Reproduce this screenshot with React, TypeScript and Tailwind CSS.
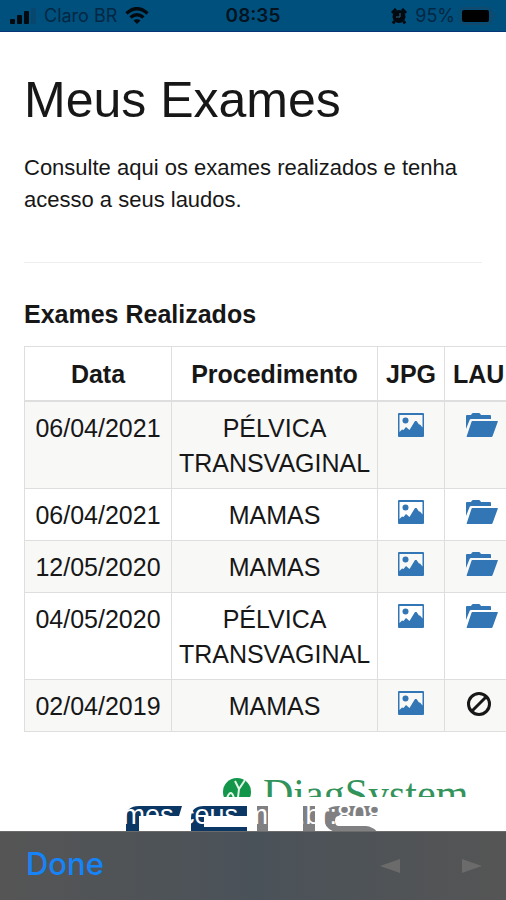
import React from 'react';

type Exam = {
  date: string;
  procedure: string[];
  report: boolean;
};

const exams: Exam[] = [
  { date: '06/04/2021', procedure: ['PÉLVICA', 'TRANSVAGINAL'], report: true },
  { date: '06/04/2021', procedure: ['MAMAS'], report: true },
  { date: '12/05/2020', procedure: ['MAMAS'], report: true },
  { date: '04/05/2020', procedure: ['PÉLVICA', 'TRANSVAGINAL'], report: true },
  { date: '02/04/2019', procedure: ['MAMAS'], report: false },
];

const PictureIcon = () => (
  <svg viewBox="0 0 26 24" className="w-[26px] h-6" fill="currentColor" aria-hidden="true">
    <path fillRule="evenodd" d="M1 0H25Q26 0 26 1V23Q26 24 25 24H1Q0 24 0 23V1Q0 0 1 0ZM1.500 2V19L4 16.500L5.500 17L8 14L11.500 17L17 8L18.500 8L21 11.500L22 11.500L24.500 14.500V2Z" />
    <circle cx="7.500" cy="7.500" r="3" />
  </svg>
);

const FolderIcon = () => (
  <svg viewBox="0 0 32 24" className="w-8 h-6" fill="currentColor" aria-hidden="true">
    <path d="M0 16V3Q0 2 1 2H5L6 .5Q6.300 0 7 0H13Q13.700 0 14 .5L15 2H24Q25 2 25 3V6H5Q4 6 3.600 7Z" />
    <path d="M6.500 8H31.500Q32 8 31.800 8.800L26.500 23.200Q26.200 24 25.500 24H1Q.4 24 .7 23.200L5.500 8.800Q5.800 8 6.500 8Z" />
  </svg>
);

const BanIcon = () => (
  <svg viewBox="0 0 26 26" className="size-[26px]" fill="none" stroke="currentColor" strokeWidth="3" aria-hidden="true">
    <circle cx="13" cy="13" r="10.500" />
    <path d="M5.500 20.500L20.500 5.500" />
  </svg>
);

const StatusBar = () => (
  <header className="flex h-8 items-center border-b border-[#06357a] bg-[#00507d] px-[10px] font-['Inter',sans-serif] text-lg leading-8 text-[#042742]">
    <div className="flex flex-1 items-center gap-2">
      <svg viewBox="0 0 26 16" className="w-[26px] h-4" aria-hidden="true">
        <g fill="#020a10">
          <rect x="0" y="11" width="5" height="5" rx="1" />
          <rect x="7" y="7" width="5" height="9" rx="1" />
          <rect x="14" y="3" width="5" height="13" rx="1" />
        </g>
        <rect x="21" y="0" width="5" height="16" rx="1" fill="#07466d" />
      </svg>
      <span>Claro BR</span>
      <svg viewBox="0 0 24 17" className="w-6 h-[17px]" fill="none" stroke="#020a10" strokeWidth="3.500" aria-hidden="true">
        <path d="M1.500 6.500Q12-3 22.500 6.500" />
        <path d="M5.500 10.500Q12 5 18.500 10.500" />
        <path d="M12 17L8.500 13.500Q12 11 15.500 13.500Z" fill="#020a10" stroke="none" />
      </svg>
    </div>
    <time className="text-[19px] font-semibold text-[#03131f]">08:35</time>
    <div className="flex flex-1 items-center justify-end gap-2">
      <svg viewBox="0 0 16 16" className="size-4" aria-hidden="true">
        <circle cx="8" cy="8.500" r="6.500" fill="#020a10" />
        <path d="M1 5L5 1M11 1L15 5M3.500 13L2 15.500M12.500 13L14 15.500" stroke="#020a10" strokeWidth="3" />
        <path d="M9 5V9H5" fill="none" stroke="#35627e" />
      </svg>
      <span>95%</span>
      <svg viewBox="0 0 37 18" className="w-[37px] h-[18px] -ml-1" aria-hidden="true">
        <rect x="1" y="1" width="31" height="16" rx="4" fill="none" stroke="#164868" strokeWidth="1.500" />
        <rect x="3" y="3" width="27" height="12" rx="2" fill="#000" />
        <path d="M34 6Q37 9 34 12Z" fill="#164868" />
      </svg>
    </div>
  </header>
);

const ExamTable = () => (
  <table className="w-[calc(100%+64px)] table-fixed border-collapse text-center text-[25px] leading-[35px]">
    <colgroup>
      <col className="w-[147px]" />
      <col className="w-[206px]" />
      <col className="w-[67px]" />
      <col />
    </colgroup>
    <thead>
      <tr className="border-b-2 border-[#dedede]">
        <th scope="col" className="border-x border-t border-[#dedede] pb-2 pt-[10px] font-bold">Data</th>
        <th scope="col" className="border-x border-t border-[#dedede] pb-2 pt-[10px] font-bold">Procedimento</th>
        <th scope="col" className="border-x border-t border-[#dedede] pb-2 pt-[10px] font-bold">JPG</th>
        <th scope="col" className="border-x border-t border-[#dedede] pb-2 pl-2 pt-[10px] text-left font-bold">LAU</th>
      </tr>
    </thead>
    <tbody>
      {exams.map((exam, i) => (
        <tr key={i} className="align-top odd:bg-[#f8f8f7]">
          <td className="border border-[#dedede] pb-[7px] pt-[9px]">{exam.date}</td>
          <td className="border border-[#dedede] pb-[7px] pt-[9px]">
            {exam.procedure.map(line => (
              <span key={line} className="block">{line}</span>
            ))}
          </td>
          <td className="border border-[#dedede] pt-[11px]">
            <a href="#jpg" aria-label="Imagem JPG" className="flex justify-center text-[#3276b5]">
              <PictureIcon />
            </a>
          </td>
          <td className="border border-[#dedede] pl-[21px] pt-[11px]">
            {exam.report ? (
              <a href="#laudo" aria-label="Abrir laudo" className="flex text-[#3276b5]">
                <FolderIcon />
              </a>
            ) : (
              <span className="flex"><BanIcon /></span>
            )}
          </td>
        </tr>
      ))}
    </tbody>
  </table>
);

const Brands = () => (
  <div className="relative h-[66px] overflow-hidden">
    <div className="flex h-8 items-start gap-3 overflow-hidden pl-[223px] pt-[13px]">
      <svg viewBox="0 0 28 28" className="size-7 shrink-0" aria-hidden="true">
        <circle cx="14" cy="14" r="14" fill="#12964a" />
        <path d="M12 3L16 11L22 2M16 11L14 28M4 20Q8 10 11 20" fill="none" stroke="#e3f4e9" strokeWidth="2" />
      </svg>
      <span className="font-['Liberation_Serif',serif] text-[42px] leading-8 text-[#32935b]">DiagSystem</span>
    </div>
    <svg viewBox="0 0 260 28" className="ml-[126px] mt-2 w-[260px] h-7" aria-hidden="true">
      <g fill="#0b3764">
        <path d="M13 1H56L53 11H13V28H0V13Q0 1 13 1Z" />
        <path d="M78 1H121V11H78V22H121V28H65V13Q65 1 78 1Z" />
      </g>
      <g fill="#808083">
        <path d="M131 1H142V28H131Z" />
        <path d="M177 1H189V28H177Z" />
        <path d="M213 1H252V11H213Q209 11 209 16Q209 21 213 21H240Q248 22 252 28H213Q198 25 198 13Q198 1 213 1Z" />
      </g>
    </svg>
    <span className="absolute inset-x-0 bottom-0 pr-[30px] text-center text-[27px] leading-8 text-white">exames.ceus.med.br:8080</span>
  </div>
);

const Toolbar = () => (
  <footer className="flex h-[69px] items-center justify-between border-t border-[#6b6b6b] bg-linear-to-r from-[#555] via-[#4a5259] to-[#555] pl-[26px] pr-6">
    <button type="button" className="pb-1 font-['Inter',sans-serif] text-[31px] font-medium leading-9 text-[#1683f7]">Done</button>
    <div className="flex gap-[62px] text-[#6b6b6b]">
      <button type="button" aria-label="Voltar">
        <svg viewBox="0 0 20 14" className="w-5 h-[14px]" fill="currentColor"><path d="M20 0V14L0 7Z" /></svg>
      </button>
      <button type="button" aria-label="Avançar">
        <svg viewBox="0 0 20 14" className="w-5 h-[14px]" fill="currentColor"><path d="M0 0V14L20 7Z" /></svg>
      </button>
    </div>
  </footer>
);

const App: React.FC = () => (
  <div className="flex min-h-screen flex-col overflow-hidden bg-white font-['Liberation_Sans',Arial,sans-serif] text-[#171717]">
    <StatusBar />
    <main className="flex-1 px-6 pt-10">
      <h1 className="text-[50px] leading-[56px]">Meus Exames</h1>
      <p className="mt-6 text-[22px] leading-8">Consulte aqui os exames realizados e tenha acesso a seus laudos.</p>
      <hr className="mt-[46px] border-[#eee]" />
      <h2 className="mb-4 mt-[35px] text-[25px] font-bold leading-8">Exames Realizados</h2>
      <ExamTable />
    </main>
    <Brands />
    <Toolbar />
  </div>
);

export default App;
